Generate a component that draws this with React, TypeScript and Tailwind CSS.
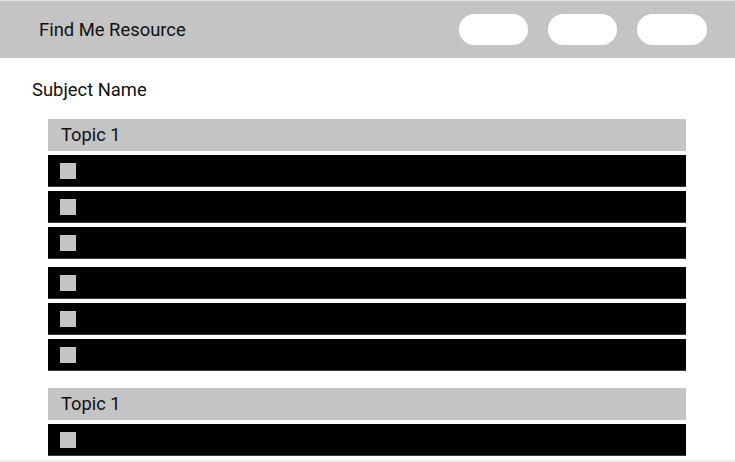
import React from "react";

function Row() {
  return (
    <div className="h-[32px] bg-black flex items-center pl-[12px] border-b border-[#3a3a3a]">
      <div className="w-[16px] h-[16px] bg-[#c4c4c4]" />
    </div>
  );
}

function Topic({ label }: { label: string }) {
  return (
    <div className="h-[32px] bg-[#c4c4c4] flex items-center pl-[13px] text-[18.3px] text-[#111111]">
      {label}
    </div>
  );
}

export default function App() {
  return (
    <div
      className="w-[735px] h-[462px] bg-white overflow-hidden flex flex-col"
      style={{ fontFamily: "Roboto, 'Noto Sans', sans-serif" }}
    >
      <header className="h-[58px] shrink-0 bg-[#c4c4c4] border-t border-[#e2e2e2] flex items-center pl-[39px] pr-[28px]">
        <div className="text-[18.4px] text-[#111111] flex-1">Find Me Resource</div>
        <div className="flex gap-[20px]">
          <div className="w-[69px] h-[31px] rounded-full bg-white" />
          <div className="w-[69px] h-[31px] rounded-full bg-white" />
          <div className="w-[70px] h-[31px] rounded-full bg-white" />
        </div>
      </header>
      <div className="flex-1 relative">
        <div className="pl-[32px] pt-[21px] text-[18.4px] leading-[21px] text-[#111111]">Subject Name</div>
        <div className="ml-[48px] w-[638px] mt-[19px] flex flex-col">
          <Topic label="Topic 1" />
          <div className="flex flex-col gap-[4px] mt-[4px]">
            <Row />
            <Row />
            <Row />
          </div>
          <div className="flex flex-col gap-[4px] mt-[8px]">
            <Row />
            <Row />
            <Row />
          </div>
          <div className="mt-[17px]">
            <Topic label="Topic 1" />
          </div>
          <div className="mt-[4px]">
            <Row />
          </div>
        </div>
      </div>
      <div className="h-[2px] shrink-0 bg-[#ececec]" />
    </div>
  );
}
